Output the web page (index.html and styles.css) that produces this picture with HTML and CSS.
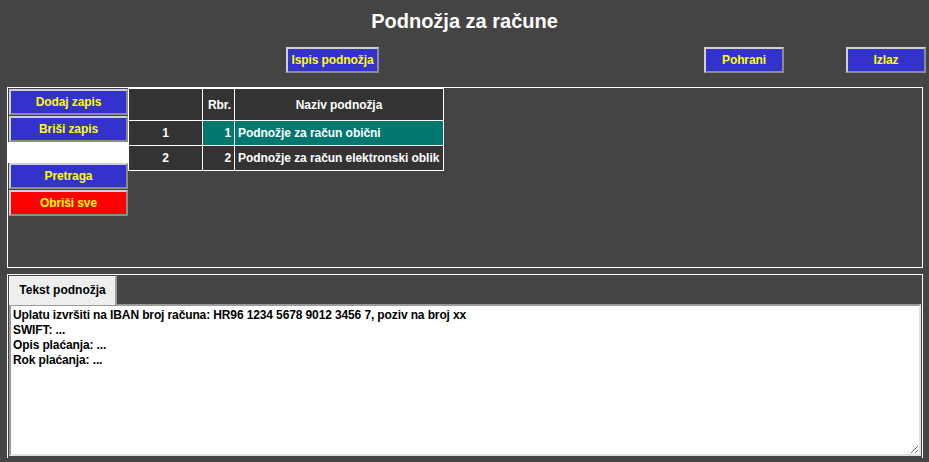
FILE: index.html
```html
<!DOCTYPE html>
<html lang="hr">
<head>
  <meta charset="UTF-8">
  <title>Podnožja za račune</title>
  <link rel="stylesheet" href="styles.css">
</head>
<body>

<div class="title">Podnožja za račune</div>

<div class="toolbar">
  <button class="btn btn-print">Ispis podnožja</button>
  <button class="btn btn-save">Pohrani</button>
  <button class="btn btn-exit">Izlaz</button>
</div>

<div class="panel list-panel">
  <div class="side">
    <button class="btn side-btn">Dodaj zapis</button>
    <button class="btn side-btn">Briši zapis</button>
    <div class="side-gap"></div>
    <button class="btn side-btn">Pretraga</button>
    <button class="btn side-btn btn-red">Obriši sve</button>
  </div>
  <table class="grid">
    <tr>
      <th class="c-idx"></th>
      <th class="c-rbr">Rbr.</th>
      <th class="c-name">Naziv podnožja</th>
    </tr>
    <tr class="selected">
      <td class="c-idx">1</td>
      <td class="c-rbr">1</td>
      <td class="c-name">Podnožje za račun obični</td>
    </tr>
    <tr>
      <td class="c-idx">2</td>
      <td class="c-rbr">2</td>
      <td class="c-name">Podnožje za račun elektronski oblik</td>
    </tr>
  </table>
</div>

<div class="panel text-panel">
  <div class="tabs">
    <div class="tab">Tekst podnožja</div>
  </div>
  <textarea class="footer-text">Uplatu izvršiti na IBAN broj računa: HR96 1234 5678 9012 3456 7, poziv na broj xx
SWIFT: ...
Opis plaćanja: ...
Rok plaćanja: ...</textarea>
</div>

</body>
</html>
```

FILE: styles.css
```css
body {
  margin: 0;
  background-color: #444;
  font-family: "Liberation Sans", Arial, sans-serif;
  color: #fff;
}
.title {
  height: 42px;
  line-height: 42px;
  text-align: center;
  font-size: 20px;
  font-weight: bold;
}
.toolbar {
  display: flex;
  padding: 5px 3px 0 286px;
}
.btn {
  height: 26px;
  padding: 0;
  border: 2px solid;
  border-color: #d0d0d0 #8c8c8c #8c8c8c #d0d0d0;
  background-color: #3333cc;
  color: #ffff00;
  font-family: "Liberation Sans", Arial, sans-serif;
  font-size: 12px;
  font-weight: bold;
  letter-spacing: -0.1px;
  cursor: pointer;
}
.btn-print {
  width: 93px;
}
.btn-save {
  width: 80px;
  margin-left: auto;
}
.btn-exit {
  width: 80px;
  margin-left: 62px;
}
.panel {
  margin: 0 6px 0 7px;
  border: 1px solid #fff;
}
.list-panel {
  display: flex;
  align-items: flex-start;
  height: 179px;
  margin-top: 14px;
}
.side {
  display: flex;
  flex-direction: column;
  width: 120px;
  padding-top: 1px;
}
.side-btn {
  width: 119px;
  margin-left: 1px;
  margin-bottom: 1px;
}
.side-gap {
  height: 21px;
  margin-top: -1px;
  background: #fff;
}
.btn-red {
  background-color: #ff0000;
}
.grid {
  border-collapse: collapse;
  table-layout: fixed;
  width: 316px;
  font-size: 12px;
  font-weight: bold;
  letter-spacing: -0.06px;
}
.grid th,
.grid td {
  border: 1px solid #fff;
  background-color: #333;
  padding: 0 3px;
  height: 24px;
  overflow: hidden;
  white-space: nowrap;
}
.grid th {
  height: 31px;
  text-align: center;
}
.grid .c-idx {
  width: 67px;
  text-align: center;
}
.grid .c-rbr {
  width: 25px;
  text-align: right;
}
.grid .c-name {
  width: 202px;
}
.grid td.c-name {
  text-align: left;
}
.grid tr.selected .c-rbr,
.grid tr.selected .c-name {
  background-color: #00786f;
}
.text-panel {
  margin-top: 6px;
  border-bottom: none;
  height: 183px;
}
.tabs {
  height: 29px;
  padding: 1px 0 0 1px;
  box-sizing: border-box;
}
.tab {
  display: inline-block;
  box-sizing: border-box;
  width: 108px;
  height: 29px;
  line-height: 26px;
  text-align: center;
  background-color: #eee;
  color: #000;
  font-size: 12px;
  font-weight: bold;
  border-top: 1px solid #f6f6f6;
  border-left: 1px solid #f6f6f6;
  border-right: 2px solid #9a9a9a;
}
.footer-text {
  display: block;
  box-sizing: border-box;
  width: 912px;
  height: 152px;
  margin: 0 0 0 1px;
  padding: 2px 2px;
  border: 2px solid;
  border-color: #9a9a9a #e0e0e0 #e0e0e0 #9a9a9a;
  background: #fff;
  color: #000;
  font-family: "Liberation Sans", Arial, sans-serif;
  font-size: 12px;
  font-weight: bold;
  line-height: 15px;
  letter-spacing: -0.12px;
  outline: none;
}
```
